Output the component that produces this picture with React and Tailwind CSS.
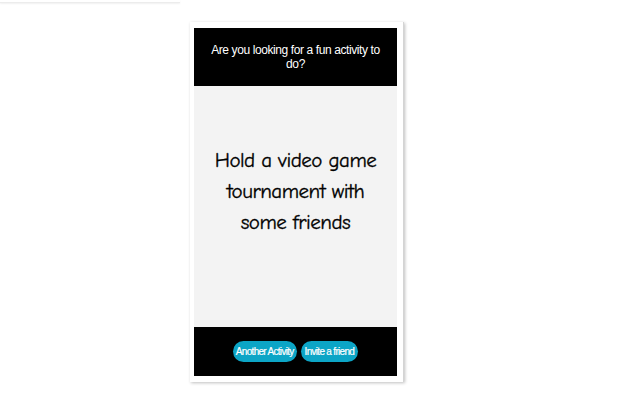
export default function App() {
  return (
    <div className="w-[640px] h-[400px] bg-white overflow-hidden">
      {/* faint strip at the very top */}
      <div className="w-[180px] h-[3px] border-b border-[#ececec] shadow-[0_1px_2px_rgba(0,0,0,0.06)]" />

      <div className="ml-[190px] mt-[19px] w-[214px] h-[360px] bg-white pl-[4px] pr-[6px] pt-[6px] pb-[6px] shadow-[1px_1px_3px_rgba(0,0,0,0.25)] border-r border-[#d4d4d4] flex flex-col">
        {/* Header */}
        <div className="h-[58px] bg-black flex items-center justify-center px-[14px]">
          <p
            className="text-white text-[12px] leading-[14px] tracking-[-0.4px] text-center"
            style={{ fontFamily: '"Liberation Sans", Arial, sans-serif' }}
          >
            Are you looking for a fun activity to
            <br />
            do?
          </p>
        </div>

        {/* Activity */}
        <div className="flex-1 bg-[#f3f3f3] flex items-start justify-center pt-[59px] px-[12px]">
          <p
            className="text-black text-[21px] leading-[31px] tracking-[-0.5px] text-center [-webkit-text-stroke:0.3px_black]"
            style={{ fontFamily: '"Comic Sans MS", "Comic Neue", "Noto Sans", sans-serif' }}
          >
            Hold a video game
            <br />
            tournament with
            <br />
            some friends
          </p>
        </div>

        {/* Footer */}
        <div className="h-[49px] bg-black flex items-center justify-center gap-[4px]">
          <button
            className="h-[21px] px-[3px] rounded-full bg-[#0ca5c6] text-white text-[10px] tracking-[-0.7px] [-webkit-text-stroke:0.2px_white]"
            style={{ fontFamily: '"Liberation Sans Narrow", "Arial Narrow", "Liberation Sans", sans-serif' }}
          >
            Another Activity
          </button>
          <button
            className="h-[21px] px-[4px] rounded-full bg-[#0ca5c6] text-white text-[10px] tracking-[-0.7px] [-webkit-text-stroke:0.2px_white]"
            style={{ fontFamily: '"Liberation Sans Narrow", "Arial Narrow", "Liberation Sans", sans-serif' }}
          >
            Invite a friend
          </button>
        </div>
      </div>
    </div>
  )
}
